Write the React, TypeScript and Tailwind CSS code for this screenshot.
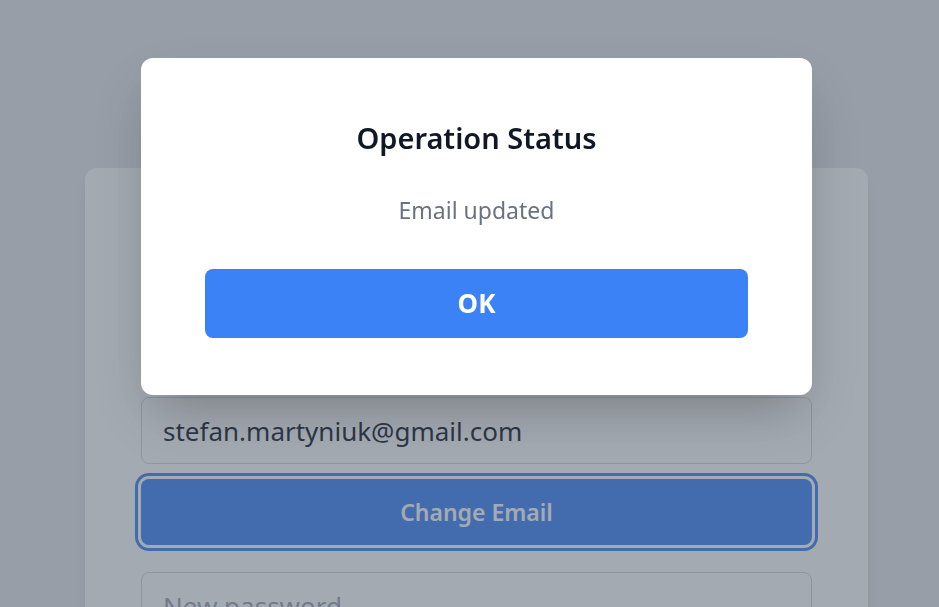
import { useState } from "react"

export default function App() {
  const [email, setEmail] = useState("stefan.martyniuk@gmail.com")
  const [open, setOpen] = useState(true)

  return (
    <main
      className="min-h-screen bg-gray-200 overflow-hidden"
      style={{ fontFamily: '"Noto Sans", "Open Sans", sans-serif' }}
    >
      {/* Settings card (upper part sits under the modal) */}
      <div className="flex justify-center pl-[14px] pt-[168px]">
        <div className="w-[783px] bg-white rounded-xl shadow-lg px-14 pt-[229px] pb-16">
          <input
            value={email}
            onChange={(e) => setEmail(e.target.value)}
            className="w-full h-[67px] px-[21px] text-[26px] text-gray-900 bg-white border border-gray-300 rounded-lg outline-none"
          />
          <button className="mt-[15px] w-full h-[66px] rounded-lg bg-[#3b82f6] text-white text-[23px] font-semibold ring-3 ring-[#3b82f6] ring-offset-3 ring-offset-white">
            Change Email
          </button>
          <input
            placeholder="New password"
            type="password"
            className="mt-[27px] w-full h-[67px] px-[21px] text-[26px] text-gray-900 placeholder:text-gray-400 bg-white border border-gray-300 rounded-lg outline-none"
          />
        </div>
      </div>

      {/* Status modal */}
      {open && (
        <div className="fixed inset-0 bg-gray-600/50 flex justify-center items-start pl-[14px] pt-[58px]">
          <div className="w-[671px] bg-white rounded-xl shadow-2xl pt-[62px] px-16 pb-[57px] text-center">
            <h2 className="text-[29px] leading-9 font-semibold text-gray-900">Operation Status</h2>
            <p className="mt-[38px] text-[23px] leading-8 text-gray-500">Email updated</p>
            <button
              onClick={() => setOpen(false)}
              className="mt-[43px] w-full h-[69px] rounded-lg bg-[#3b82f6] text-white text-[26px] font-bold"
            >
              OK
            </button>
          </div>
        </div>
      )}
    </main>
  )
}
